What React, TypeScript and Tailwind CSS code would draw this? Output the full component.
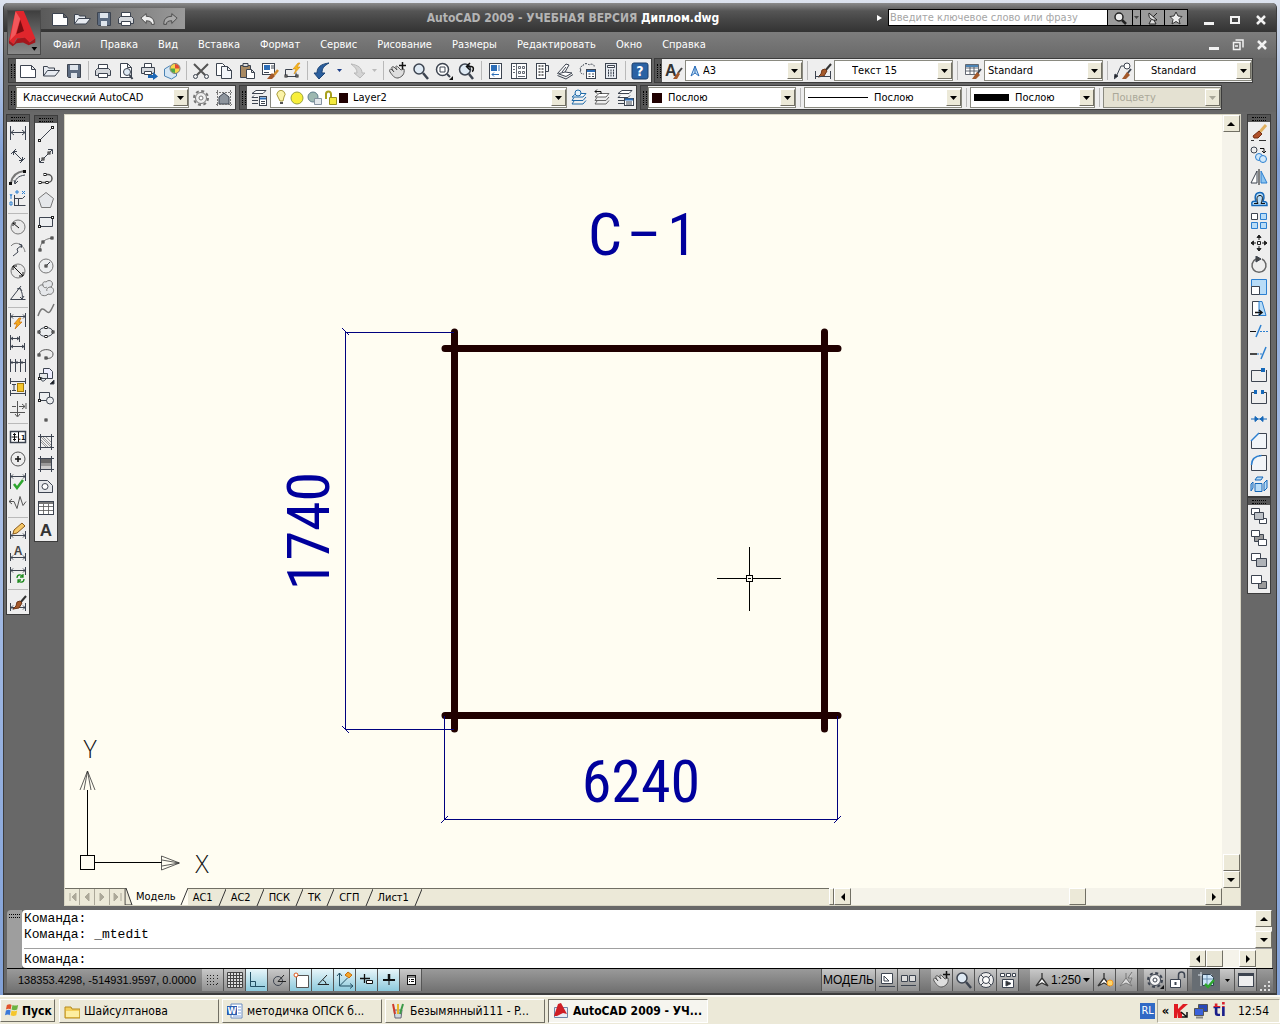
import type { ReactNode } from "react";
import clsx from "clsx";

type Item = string | null;

const sq = (x: number, y: number) => <rect x={x - 1} y={y - 1} width="2" height="2" fill="#fff" stroke="#222" strokeWidth="1" />;
const dimBase = <path d="M1.500 9v8M16.500 9v8M2 13.500h14M4 11.500l-2 2 2 2M14 11.500l2 2-2 2" />;
const dimTop = <path d="M1.500 1v16M16.500 1v8M2 4.500h14M4 2.500l-2 2 2 2M14 2.500l2 2-2 2" />;
const brush = <><path d="M17 2l-6 7" stroke="#333" strokeWidth="2" /><path d="M11 7l2 2-3 5-6 1 3-3 1-4z" fill="#a4592a" stroke="#6d3517" /></>;
const layers = (
  <><path d="M6 4.500h10l-3 3.500H2z" fill="#fff" /><path d="M4 8.500l-2 3h11l3-3.500M4 12l-2 3h11l3-3.500" /></>
);

// every toolbar glyph is drawn on an 18x18 grid
const glyphs: Record<string, ReactNode> = {
  "Новый": <path d="M1.500 3.500h11l4 4v8h-15zM12.500 3.500v4h4" fill="#fff" />,
  "Открыть": <path d="M1.500 14V4.500h4l1 1.500h6v2.500M1.500 14l4-5.500h12L13 14z" fill="#e8ecf2" />,
  "Сохранить": <><path d="M2.500 2.500h13v13h-12l-1-1z" fill="#5c6b80" /><path d="M5 3h8v5H5zM6 11h6v5H6z" fill="#dfe5ec" stroke="none" /></>,
  "Печать": <><path d="M4.500 6V2.500h9V6" fill="#fff" /><path d="M1.500 8.500l2-2h11l2 2v5h-15z" fill="#d5d8dc" /><path d="M4.500 11.500h9v4h-9z" fill="#fff" /></>,
  "Просмотр": <><path d="M3.500 1.500h7l4 4v10h-11zM10.500 1.500v4h4" fill="#fff" /><circle cx="10" cy="10" r="3.500" fill="#dfeaf4" /><path d="M12.500 13l3 4" strokeWidth="2" /></>,
  "Публикация": <><path d="M4.500 5V1.500h7V5" fill="#fff" /><path d="M1.500 5.500h13v6h-13z" fill="#d5d8dc" /><path d="M4.500 9.500h7v3h-7z" fill="#fff" /><path d="M8 13h5v-3l5 4.500-5 3.500v-2H8z" fill="#1b66b5" stroke="none" /></>,
  "3D DWF": <><path d="M1.500 7l5-3 7 2v8l-5 3-7-3z" fill="#d5e6f4" stroke="#4b83b4" /><circle cx="12" cy="6.500" r="5" fill="#f6d64a" stroke="#7a7a7a" /><path d="M12 6.500V2a5 5 0 0 1 4.500 4.500z" fill="#e24a36" stroke="none" /><path d="M12 6.500H7.500A5 5 0 0 0 12 11z" fill="#4ea84a" stroke="none" /></>,
  "Вырезать": <><path d="M2 2l11 11M16 2L5 13" strokeWidth="2" stroke="#555" /><circle cx="3.500" cy="14.500" r="2" /><circle cx="14.500" cy="14.500" r="2" /></>,
  "Копировать": <><path d="M1.500 1.500h6l3 3v9h-9z" fill="#fff" /><path d="M6.500 4.500h6l4 4v8h-10zM12.500 4.500v4h4" fill="#f3f6fa" /></>,
  "Вставить": <><path d="M2.500 3.500h10v12h-10z" fill="#a98a62" /><path d="M5 1.500h5v3H5z" fill="#ddd" /><path d="M8.500 7.500h5l3 3v6h-8zM13.500 7.500v3h3" fill="#fff" /></>,
  "Копирование свойств": <><rect x="1.500" y="1.500" width="12" height="11" fill="#fff" /><rect x="3" y="3" width="6" height="5" fill="#2b6db8" stroke="none" /><path d="M10 4h3M10 6h3M3 10.500h5" /><path d="M17 8l-4 5" stroke="#d08a2c" strokeWidth="2.500" /><path d="M11 11l3 3-3 3H6z" fill="#a4592a" stroke="none" /></>,
  "Редактор блоков": <><path d="M1.500 13V7.500h7M3 14.500h9v-4" /><path d="M14 1l-5 6h3l-2 5 6-7h-3l3-4z" fill="#f4b71e" stroke="#d98c0c" strokeWidth=".6" />{sq(2, 14)}{sq(13, 14)}</>,
  "Отменить": <path d="M6 17L1 11h3C4 5 8 2 16 1c-5 3-7 5-7 10h3z" fill="#2b5f9e" stroke="#1d4576" />,
  "Повторить": <path d="M12 16l5-5h-3c0-5-4-8-11-9 4 3 6 5 6 9H6z" fill="#d4d4d4" stroke="#b8b8b8" />,
  "Панорамирование": <><path d="M2 7l3 3C2 6 2 4 5 5l3 3C6 4 7 3 9 5l3 3 3-1c1 5-2 8-6 9-4 0-5-2-8-6-1-2 0-3 1-3z" fill="#dedede" stroke="#555" /><path d="M13.500 0v7M10 3.500h7" stroke="#111" strokeWidth="1.500" /></>,
  "Зумирование": <><circle cx="7" cy="7" r="5" fill="#dfeaf4" strokeWidth="1.500" /><path d="M11 11l5 6" strokeWidth="2.500" /></>,
  "Рамка": <><circle cx="7.500" cy="7.500" r="6" fill="#fff" strokeWidth="1.500" /><path d="M5 5h5v5H5z" /><path d="M12 12l3 3" strokeWidth="2" /><path d="M14 18h4v-4z" fill="#111" stroke="none" /></>,
  "Предыдущий": <><circle cx="7" cy="7.500" r="5.500" fill="#dfeaf4" strokeWidth="1.500" /><path d="M11 12l4 5" strokeWidth="2.500" /><path d="M9 4.500h4c3 0 3 4 1 5M12 1L8.500 4.500 12 8" stroke="#111" strokeWidth="1.500" /></>,
  "Свойства": <><rect x="2.500" y="1.500" width="12" height="15" fill="#fff" /><rect x="4" y="3" width="6" height="6" fill="#2b6db8" stroke="none" /><path d="M11 4h2M11 6h2M11 8h2M5 12.500h7M7 10.500l-2 2 2 2" stroke="#2b6db8" /></>,
  "Центр управления": <><rect x="1.500" y="1.500" width="15" height="15" fill="#fff" /><path d="M6.500 2v14M3 4.500h2M3 7.500h2M3 10.500h2M8.500 4.500h2v2h-2zM12.500 4.500h2v2h-2zM8.500 9.500h2v2h-2zM12.500 9.500h2v2h-2zM8 14.500h7" strokeWidth=".8" /></>,
  "Палитры": <><rect x="3.500" y="1.500" width="9" height="15" fill="#fff" /><path d="M5.500 4h5M5.500 7h5M5.500 10h5M5.500 13h5" strokeDasharray="2 1" strokeWidth="2" stroke="#777" /><path d="M12.500 3.500h3v6h-3" /></>,
  "Подшивки": <><path d="M1.500 11.500L10 2l3 1-4 7 7 1-6 3.500z" fill="#fff" /><path d="M9 10l-6 1.500M10 5l-4 5M1.500 13.500L10 17l7-4.500" /></>,
  "Пометки": <><path d="M2 8c-2-2 0-4 2-4 0-3 5-3 6-1 3-2 6 0 5 2M2 8c-2 2 0 4 3 4" strokeDasharray="2 1" /><rect x="7.500" y="7.500" width="9" height="9" fill="#fff" /><path d="M8 9h8" stroke="#2b6db8" strokeWidth="2" /><path d="M9.500 12h2M13 12h2M9.500 14.500h2M13 14.500h2" /></>,
  "Калькулятор": <><rect x="3.500" y="1.500" width="11" height="15" fill="#e8ecf2" /><path d="M5.500 3.500h7v2h-7z" fill="#fff" /><path d="M6 8.500h6M6 11h6M6 13.500h6" strokeDasharray="1 1.500" strokeWidth="2" /></>,
  "Справка AutoCAD": <><rect x="1" y="1" width="16" height="16" rx="2" fill="#2a62a4" stroke="#1b3f6d" /><text x="9" y="14" textAnchor="middle" fontSize="14" fontWeight="700" fill="#fff" stroke="none">?</text></>,
  "Стиль текста": <><text x="0" y="14" fontSize="16" fontWeight="700" fill="#333" stroke="none" className="font-['Liberation_Sans',sans-serif]">A</text><path d="M17 6l-4 5" stroke="#444" strokeWidth="2" /><path d="M13 10l2 2-3 5H8z" fill="#a4592a" stroke="none" /></>,
  "Размерный стиль": <>{brush}<path d="M1.500 9v8M16.500 9v8M2 14.500h14" /></>,
  "Стиль таблиц": <><path d="M1.500 2.500h13v10h-13zM2 6h12M2 9h12M6 3v9M10 3v9" fill="#fff" strokeWidth=".8" /><path d="M2 4h12" stroke="#4b83b4" strokeWidth="2" /><path d="M17 7l-4 5" strokeWidth="2" /><path d="M13 10l3 3-4 4H8z" fill="#a4592a" stroke="none" /></>,
  "Стиль мультивыносок": <><path d="M2 15L7 4h4" /><circle cx="13" cy="4" r="3" fill="#fff" /><path d="M0 17l1-5 3 2z" fill="#222" /><path d="M17 7l-4 5" strokeWidth="2" /><path d="M13 10l3 3-4 4H8z" fill="#a4592a" stroke="none" /></>,
  "Параметры рабочего пространства": <><circle cx="9" cy="9" r="7" strokeDasharray="3 2.500" strokeWidth="2" stroke="#777" /><circle cx="9" cy="9" r="5.500" fill="#eee" stroke="#777" /><circle cx="9" cy="9" r="2" fill="#fff" stroke="#777" /></>,
  "Мое пространство": <><path d="M4 15V8l5-4 5 4v7z" fill="#8e959d" /><path d="M1 3.500h16M1 15.500h16M2.500 1v16M15.500 1v16" strokeDasharray="2 1" stroke="#777" /></>,
  "Диспетчер слоев": <><path d="M6 1.500h10l-3 3H2zM4 6.500l-2 2h6M2 11.500h6M2 14.500h6" fill="#fff" /><rect x="9.500" y="7.500" width="7" height="9" fill="#fff" /><path d="M10 9.500h6" stroke="#2b6db8" strokeWidth="2" /><path d="M11 12.500h4M11 14.500h4" /></>,
  "Текущий слой": <g stroke="#1f6aa8">{layers}<circle cx="8" cy="4" r="3" fill="#e6f2fb" /></g>,
  "Предыдущий слой": <><g stroke="#666">{layers}</g><path d="M8 5V2.500H2m2-2L2 2.500l2 2" stroke="#111" /></>,
  "Состояния слоев": <><path d="M6 1.500h10l-3 3H2zM4 6.500l-2 2h10l2-2M2 11.500h6M2 14.500h6" fill="#fff" /><rect x="8.500" y="9.500" width="9" height="7" fill="#fff" /><path d="M9 10.500h8" stroke="#2b6db8" strokeWidth="2" /><path d="M10 13h6M10 15h6" /></>,
  // dimensions
  "Линейный": <path d="M1.500 2v14M16.500 2v14M2 8.500h14M5 6l-3 2.500L5 11M13 6l3 2.500-3 2.500" />,
  "Параллельный": <path d="M4.500 5.500l9 9M2 8l5-5M11 17l5-5M4.500 9V5.500H8M13.500 11v3.500H10" />,
  "Длина дуги": <><path d="M2 15C3 8 7 4 15 3" stroke="#777" strokeWidth="2" /><path d="M6 16c0-5 3-8 10-9M5 12l1 4 3-3" /><path d="M14 2h3v3h-3zM0 14h3v3H0z" fill="#111" stroke="none" /></>,
  "Ординатный": <><path d="M5.500 5v11M5.500 15.500h11M9.500 15V8.500h4L16 6M5.500 8.500h4" /><path d="M1 4l1 2v3M3 4L2 6M13 1l3 3M16 1l-3 3M1 12h2v3H1zM7 1h2v2H7z" stroke="#2b7fd0" /></>,
  "Радиус": <><circle cx="9" cy="9" r="7" fill="#e9e9e9" stroke="#777" /><path d="M10 10L4 5m0 3V5h3" stroke="#111" /></>,
  "С изломом": <><path d="M2 6c5-6 13-1 14 6" stroke="#777" /><path d="M4 16l5-4-1-3 5-4M10 4l3 1-1 3" /></>,
  "Диаметр": <><circle cx="9" cy="9" r="7" fill="#e9e9e9" stroke="#777" /><path d="M4 4l10 10M4 8V4h4M14 10v4h-4" stroke="#111" /></>,
  "Угловой": <path d="M12 2L1.500 15.500h15M10 4c3 3 4 7 3 11M8 5l3-1 2 3M11 13l2 2 2-3" />,
  "Быстрый": <><path d="M1.500 1v14M16.500 1v14M2 4.500h14M4 2.500l-2 2 2 2M14 2.500l2 2-2 2" /><path d="M10 6l-5 6h3l-2 5 7-7h-3l2-4z" fill="#f4a91e" stroke="#c96f08" strokeWidth=".7" /></>,
  "Базовый": <path d="M1.500 1v15M2 4.500h8M10.500 2v6M2 12.500h13M15.500 9v7M4 3L2 4.500 4 6M8 3l2 1.500L8 6M4 11l-2 1.500 2 1.500M13 11l2 1.500-2 1.500" />,
  "Продолжить": <path d="M1.500 3v13M6.500 3v13M11.500 3v13M16.500 3v13M2 6.500h15M3 5v3M8 5v3M13 5v3" />,
  "Расстояние": <><path d="M1.500 0v6M16.500 0v6M2 3.500h14M1.500 12v6M16.500 12v6M2 15.500h14M3 6.500h4M3 12.500h4M5 7v5" /><rect x="8.500" y="5.500" width="6" height="8" fill="#f6c62c" stroke="#a57c08" /></>,
  "Разрыв": <path d="M8.500 1v15M1 12.500h15M6 14l2.500 3 2.500-3M3 6.500h4M17 3v6M10 6.500h6M13 4l3 2.500L13 9" stroke="#555" />,
  "Допуск": <><rect x="1.500" y="3.500" width="15" height="11" fill="#fff" strokeWidth="1.500" /><path d="M9.500 4v10M5.500 5.500v7M2.500 9h6M4 7l1.500-1.500L7 7M4 11l1.500 1.500L7 11" stroke="#111" /><text x="13" y="12" textAnchor="middle" fontSize="7" fontWeight="700" fill="#111" stroke="none">.1</text></>,
  "Маркер центра": <><circle cx="9" cy="9" r="7" fill="#eee" stroke="#555" /><path d="M9 6v6M6 9h6" stroke="#111" strokeWidth="1.500" /></>,
  "Контроль": <>{dimTop}<path d="M5 12l3 4 6-8" stroke="#2da52d" strokeWidth="2.500" /></>,
  "С изломом линейный": <path d="M0 7.500h5l3 7 3-12 3 9 3-4M3 5L0 7.500 3 10" stroke="#555" />,
  "Редактировать размер": <>{dimBase}<path d="M13 1l3 3-8 7-4 1 1-4z" fill="#f5c768" stroke="#8a5a1a" /></>,
  "Редактировать текст": <>{dimBase}<text x="9" y="11" textAnchor="middle" fontSize="12" fontWeight="700" fill="#444" stroke="none" className="font-['Liberation_Sans',sans-serif]">A</text></>,
  "Обновить размер": <>{dimTop}<path d="M8 12c0-4 5-4 6-1M14 8v3h-3M15 13c0 4-5 4-6 1M9 17v-3h3" stroke="#1f8a1f" strokeWidth="1.300" /></>,
  "Размерные стили": <>{dimBase}{brush}</>,
  // draw
  "Отрезок": <><path d="M3 15L15 3" />{sq(2.5, 15.5)}{sq(15.5, 2.5)}</>,
  "Прямая": <><path d="M3 15L15 3M11 2.500h4.500V7M7 15.500H2.500V11" />{sq(6, 12)}{sq(12, 6)}</>,
  "Полилиния": <><path d="M3 13.500h8a4 4 0 0 0 0-8H8" strokeWidth="1.500" stroke="#555" />{sq(3, 13.5)}{sq(10, 13.5)}{sq(8, 5.5)}</>,
  "Многоугольник": <path d="M9 1.500l7.500 6-3 9h-9l-3-9z" fill="#e5e7ea" stroke="#777" />,
  "Прямоугольник": <><path d="M2.500 4.500h13v9h-13z" fill="#eceef0" />{sq(2.5, 13.5)}{sq(15.5, 4.5)}</>,
  "Дуга": <><path d="M3 15C3 8 7 4 15 3" stroke="#777" />{sq(3, 15)}{sq(6, 7)}{sq(15, 3)}</>,
  "Круг": <><circle cx="9" cy="9" r="7" fill="#eceef0" stroke="#777" /><path d="M9 9l4-4" />{sq(9, 9)}</>,
  "Облако": <path d="M9 3c4-4 9 1 5 5 5 2 2 9-3 7-2 3-9 2-8-3-4-3 0-7 3-6-1-2 1-4 3-3zM6 6c0 3 3 3 4 2M14 8c-3 0-5 2-4 4" fill="#e5e7ea" stroke="#777" />,
  "Сплайн": <path d="M1 15c3-9 5-8 8-5s4 2 8-7" stroke="#777" strokeWidth="1.500" />,
  "Эллипс": <><ellipse cx="9" cy="9" rx="7" ry="4.500" fill="#eceef0" />{sq(2, 9)}{sq(16, 9)}{sq(9, 4.5)}{sq(9, 13.5)}</>,
  "Эллиптическая дуга": <><path d="M2 10c0-7 14-7 14-1 0 4-4 5-7 4" stroke="#555" />{sq(2, 10)}{sq(9, 13)}</>,
  "Вставить блок": <><path d="M6.500 1.500h6l3 3v7h-9z" fill="#eef" /><path d="M2.500 6.500h8v5h-8zM9 12c-4 5-6 0-4-2" fill="#e5e7ea" /><path d="M13 17h4v-4z" fill="#111" />{sq(2.5, 11.5)}</>,
  "Создать блок": <><path d="M2.500 3.500h10v8h-10z" fill="#eceef0" /><circle cx="13" cy="11.500" r="3.500" fill="#eceef0" />{sq(2.5, 11.5)}</>,
  "Точка": sq(9, 9),
  "Штриховка": <><path d="M1 3.500h16M1 14.500h16M3.500 1v16M14.500 1v16" /><path d="M4 9l5 5M4 4l10 10M9 4l5 5M6 4l8 8M4 7l7 7" stroke="#777" strokeWidth=".7" /></>,
  "Градиент": <><rect x="4" y="4" width="10" height="4" fill="#666" stroke="none" /><rect x="4" y="8" width="10" height="3" fill="#999" stroke="none" /><rect x="4" y="11" width="10" height="3" fill="#ccc" stroke="none" /><path d="M1 3.500h16M1 14.500h16M3.500 1v16M14.500 1v16" /></>,
  "Область": <><path d="M1.500 3.500h9l5 5v7h-14z" fill="#e5e7ea" /><circle cx="8" cy="9.500" r="3" fill="#fff" /></>,
  "Таблица": <><rect x="1.500" y="2.500" width="15" height="13" fill="#fff" /><path d="M2 4h14" stroke="#777" strokeWidth="2" /><path d="M2 7.500h14M2 11.500h14M6.500 5v10M11.500 5v10" stroke="#555" strokeWidth=".8" /></>,
  "Многострочный текст": <text x="9" y="15" textAnchor="middle" fontSize="17" fontWeight="700" fill="#333" stroke="none" className="font-['Liberation_Sans',sans-serif]">A</text>,
  // modify
  "Стереть": <><path d="M16 1L9 9" stroke="#e0b060" strokeWidth="3" /><path d="M9 7l3 3-4 4H4l-1-2z" fill="#b0502a" stroke="#702c10" /><path d="M1 16.500h3M9 16.500h7" stroke="#333" /></>,
  "Копировать объект": <><circle cx="4" cy="4" r="3" /><path d="M10 2.500h4v4M12 5l2 2 2-2" stroke="#111" /><g fill="#cfe7fa" stroke="#2b7fd0"><circle cx="9" cy="11" r="3.500" /><circle cx="13" cy="13" r="3.500" /></g></>,
  "Зеркало": <><path d="M7 3v12H1z" fill="#fff" /><path d="M9 1v16" stroke="#111" /><path d="M11 3v12h6z" fill="#8cc4f0" stroke="#2b7fd0" /></>,
  "Подобие": <><path d="M2 15.500c-1-4 1-5 4-4-2-6 0-9 4-9s5 4 3 9c4 0 4 1 4 4z" fill="#b8dcf7" stroke="#1467b8" strokeWidth="1.500" /><path d="M4 13.500h4c-2-5-1-8 2-8s3 3 1 8h4" stroke="#111" /></>,
  "Массив": <><path d="M1.500 1.500h6v6h-6z" fill="#fff" /><path d="M10.500 1.500h6v6h-6zM1.500 10.500h6v6h-6zM10.500 10.500h6v6h-6z" fill="#b8dcf7" stroke="#2b7fd0" /></>,
  "Перенести": <><path d="M9 1v5M9 12v5M1 9h5M12 9h5M7 3.500L9 1l2 2.500zM7 14.500L9 17l2-2.500zM3.500 7L1 9l2.500 2zM14.500 7L17 9l-2.500 2z" stroke="#222" fill="#222" /><path d="M7.500 7.500h3v3h-3z" stroke="#222" /></>,
  "Повернуть": <><path d="M6 3a7 7 0 1 0 6 0" stroke="#666" strokeWidth="1.500" /><path d="M6 0l5 3-5 3z" fill="#444" /></>,
  "Масштаб": <><path d="M1.500 1.500h15v15h-7v-8h-8z" fill="#b8dcf7" stroke="#2b7fd0" /><path d="M1.500 8.500h8v8h-8z" fill="#fff" /></>,
  "Растянуть": <><path d="M2.500 1.500h7v14h-7z" fill="#fff" /><path d="M9 1.500h3l4 14H9z" fill="#b8dcf7" stroke="#2b7fd0" /><path d="M5 12.500h6M9 10l3 2.500L9 15" stroke="#111" strokeWidth="1.500" /></>,
  "Обрезать": <><path d="M0 9.500h6" stroke="#111" /><path d="M10 9.500h8" strokeDasharray="2 1" stroke="#2b7fd0" /><path d="M6 15l5-12" stroke="#2b7fd0" strokeWidth="1.500" /></>,
  "Удлинить": <><path d="M0 10h7" stroke="#111" strokeWidth="1.500" /><path d="M7 10h5" strokeDasharray="2 1" stroke="#2b7fd0" /><path d="M11 15l5-12" stroke="#2b7fd0" strokeWidth="1.500" /></>,
  "Разорвать в точке": <><path d="M1.500 15.500V4.500h11M16.500 4v11.500h-15" /><rect x="11" y="2" width="4" height="4" fill="#1467b8" stroke="none" /></>,
  "Разорвать": <><path d="M4 4.500H1.500v11h15v-11H14" /><path d="M4 2h3v4H4zM11 2h3v4h-3z" fill="#1467b8" stroke="none" /></>,
  "Соединить": <path d="M1 9h16M5 6.500L8 9l-3 2.500zM13 6.500L10 9l3 2.500z" fill="#1467b8" stroke="#1467b8" />,
  "Фаска": <><path d="M8 1.500h8.500v15h-15V8" fill="#f2f5f8" /><path d="M1 9l8-8" stroke="#2b7fd0" strokeWidth="1.500" /></>,
  "Сопряжение": <><path d="M9 1.500h7.500v15h-15V10" fill="#f2f5f8" /><path d="M1.500 11c0-6 4-9 10-9.500" stroke="#2b7fd0" strokeWidth="1.500" /></>,
  "Расчленить": <g fill="#b8dcf7" stroke="#1467b8"><path d="M5 7.500h7v8H5zM5 4l2-3h6l-2 3zM14 7l3-3v8l-3 3zM1 8l2-2v6l-2 3z" /></g>,
  // draw order
  "На передний план": <><path d="M1.500 1.500h8v6h-8zM9.500 11.500h7v5h-7z" fill="#fff" /><path d="M4.500 5.500h9v7h-9z" fill="#bcc0c5" /></>,
  "На задний план": <><path d="M4.500 5.500h9v7h-9z" fill="#999" /><path d="M1.500 1.500h8v6h-8zM8.500 10.500h8v6h-8z" fill="#fff" /></>,
  "Над объектами": <><path d="M1.500 2.500h9v7h-9z" fill="#fff" /><path d="M6.500 7.500h10v8h-10z" fill="#aeb2b7" /></>,
  "Под объектами": <><path d="M8.500 8.500h8v7h-8z" fill="#999" /><path d="M1.500 2.500h10v8h-10z" fill="#fff" /></>,
  // status bar
  "Шаг": <path d="M3 4.500h8M3 7.500h8M3 10.500h8M3 13.500h10M13.500 4v6M13.500 12v2" strokeDasharray="1 2" stroke="#222" />,
  "Сетка": <path d="M1.500 1.500h15v15h-15zM4.500 2v14M7.500 2v14M10.500 2v14M13.500 2v14M2 4.500h14M2 7.500h14M2 10.500h14M2 13.500h14" stroke="#444" fill="#ddd" />,
  "Орто": <path d="M2.500 1v14.500H17M2.500 10.500h5v5" stroke="#234f63" />,
  "Полярное": <><circle cx="8" cy="10" r="4.500" /><path d="M14 4L8 10.500h8" stroke="#222" /></>,
  "Привязка": <><path d="M4.500 4.500h12v12h-12z" fill="#fff" stroke="#555" /><circle cx="4" cy="4" r="2" fill="#fff" stroke="#e05a1c" /></>,
  "Отслеживание": <path d="M13 4L4 13.500h11M9 9c2 1 3 3 3 4" stroke="#222" />,
  "ДПСК": <><path d="M3.500 2v13h13M3.500 15l8-8M1 5l2.500-3L6 5M14 12.500l3 2.500-3 2.500" stroke="#234f63" /><path d="M12 1l4 3-3 3-4-3z" fill="#f5a62a" stroke="#c76c0a" /></>,
  "Дин. ввод": <><path d="M6.500 3v9M2 7.500h10" stroke="#111" strokeWidth="1.300" /><path d="M8.500 9.500h6v3h-6z" fill="#fff" stroke="#111" /></>,
  "Вес линий": <><path d="M9 3v11" stroke="#111" strokeWidth="1" /><path d="M3 9h12" stroke="#111" strokeWidth="2" /><path d="M9 3v6" stroke="#111" strokeWidth="2.500" /></>,
  "Быстрые свойства": <><rect x="5.500" y="4.500" width="8" height="9" fill="#fff" stroke="#111" /><path d="M6 6h7M7 8.500h1M9 8.500h3M7 10.500h1M9 10.500h3" stroke="#111" /></>,
  "Лист": <><path d="M3.500 2.500h11v10h-11z" fill="#fff" /><path d="M6 5v5h5zM1 15.500h16" /></>,
  "Быстрый просмотр": <path d="M1.500 4.500h6v6h-6zM9.500 4.500h6v6h-6zM1 14.500h15" fill="#ddd" />,
  "Штурвал": <><circle cx="9" cy="9" r="7.500" fill="#eee" /><circle cx="9" cy="9" r="3.500" fill="#fff" /><path d="M4 4l3 3M14 4l-3 3M4 14l3-3M14 14l-3-3" /></>,
  "Аниматор": <><path d="M1.500 2.500h4v3h-4zM7.500 2.500h4v3h-4zM13.500 2.500h3v3h-3z" fill="#fff" /><path d="M3.500 8.500h11v8h-11z" fill="#fff" /><path d="M7 10l5 2.500L7 15z" fill="#333" /></>,
  "Аннотации": <path d="M9 2v5L3 15l6-3 6 3-6-8" fill="#fff" stroke="#333" strokeWidth="1.300" />,
  "Видимость аннотаций": <><path d="M8 2v5L2 15l6-3 6 3-6-8" fill="#fff" stroke="#333" strokeWidth="1.300" /><circle cx="14" cy="12" r="3" fill="#ffd56a" stroke="#f59b22" /></>,
  "Автоаннотации": <g stroke="#777"><path d="M8 2v5L2 15l6-3 6 3-6-8" fill="#ddd" /><path d="M14 1l-4 6h4l-2 5" fill="#ccc" /></g>,
  "Настройка": <><circle cx="9" cy="9" r="7" strokeDasharray="3 2.500" strokeWidth="2" /><circle cx="9" cy="9" r="5.500" fill="#f5f5f5" /><circle cx="9" cy="9" r="2" fill="#fff" /><path d="M14 18h4v-4z" fill="#111" stroke="none" /></>,
  "Блокировка": <><path d="M10.500 8V4a3 3 0 0 1 6 0v3" strokeWidth="1.500" /><path d="M2.500 8.500h10v8h-10z" fill="#fff" /><path d="M7.500 11v3" strokeWidth="2" /></>,
  "Доверенные": <><path d="M4 1v14M1 4h14" stroke="#dfe8f0" /><path d="M5.500 3.500h8l3 3v8h-11z" fill="#cfe7fa" stroke="#345" /><path d="M6 8h10M10 4v10" stroke="#6b8fb0" /><path d="M8 13l3 3 6-7" stroke="#2da52d" strokeWidth="2.500" /></>,
  "Очистить экран": <><rect x="1.500" y="2.500" width="15" height="13" fill="#eee" /><path d="M2 4h14" strokeWidth="2" /></>,
};

function Icon({ name }: { name: string }) {
  return (
    <svg viewBox="0 0 18 18" className="size-[18px] shrink-0" fill="none" stroke="#3d4450" aria-hidden="true">
      {glyphs[name]}
    </svg>
  );
}

const mainTools: Item[] = ["Новый", "Открыть", "Сохранить", null, "Печать", "Просмотр", "Публикация", "3D DWF", null, "Вырезать", "Копировать", "Вставить", "Копирование свойств", "Редактор блоков", null, "Отменить", ">", "Повторить", ">>", null, "Панорамирование", "Зумирование", "Рамка", "Предыдущий", null, "Свойства", "Центр управления", "Палитры", "Подшивки", "Пометки", "Калькулятор", null, "Справка AutoCAD"];
const dimTools: Item[] = ["Линейный", "Параллельный", "Длина дуги", "Ординатный", null, "Радиус", "С изломом", "Диаметр", "Угловой", null, "Быстрый", "Базовый", "Продолжить", "Расстояние", "Разрыв", null, "Допуск", "Маркер центра", "Контроль", "С изломом линейный", null, "Редактировать размер", "Редактировать текст", "Обновить размер", null, "Размерные стили"];
const drawTools: Item[] = ["Отрезок", "Прямая", "Полилиния", "Многоугольник", "Прямоугольник", "Дуга", "Круг", "Облако", "Сплайн", "Эллипс", "Эллиптическая дуга", "Вставить блок", "Создать блок", "Точка", "Штриховка", "Градиент", "Область", "Таблица", "Многострочный текст"];
const modifyTools: Item[] = ["Стереть", "Копировать объект", "Зеркало", "Подобие", "Массив", "Перенести", "Повернуть", "Масштаб", "Растянуть", "Обрезать", "Удлинить", "Разорвать в точке", "Разорвать", "Соединить", "Фаска", "Сопряжение", "Расчленить"];
const orderTools: Item[] = ["На передний план", "На задний план", "Над объектами", "Под объектами"];
const menus = ["Файл", "Правка", "Вид", "Вставка", "Формат", "Сервис", "Рисование", "Размеры", "Редактировать", "Окно", "Справка"];
const layouts = ["Модель", "АС1", "АС2", "ПСК", "ТК", "СГП", "Лист1"];

const bevel = "border border-t-white border-l-white border-r-[#716f64] border-b-[#716f64] bg-[#ece9d8]";

function Grip({ vertical }: { vertical?: boolean }) {
  return vertical ? (
    <div className="h-[7px] shrink-0 bg-[#555] flex items-center justify-center">
      <div className="w-[14px] h-1 border-y border-dotted border-black" />
    </div>
  ) : (
    <div className="w-[7px] shrink-0 bg-[#555] flex items-center justify-center">
      <div className="h-[14px] w-1 border-x border-dotted border-black" />
    </div>
  );
}

function Bar({ children }: { children: ReactNode }) {
  return (
    <div className="flex h-[25px] border border-[#3c3c3c] bg-[#eeeeee]">
      <Grip />
      <div className="flex items-center">{children}</div>
    </div>
  );
}

function Sep({ wide }: { wide?: boolean }) {
  return <div className={clsx("h-[19px] shrink-0 flex justify-center", wide ? "w-2" : "w-[6px]")}><div className="w-px bg-[#b9b9b9]" /></div>;
}

function Tool({ name }: { name: Item }) {
  if (!name) return <Sep />;
  if (name[0] === ">") {
    return (
      <button aria-label={name === ">" ? "Список отмены" : "Список повтора"} className="w-3 h-[22px] flex items-center justify-center">
        <svg viewBox="0 0 5 3" className="w-[5px] h-[3px]"><path d="M0 0h5L2.500 3z" fill={name === ">" ? "#1d3f8a" : "#bbb"} /></svg>
      </button>
    );
  }
  return (
    <button aria-label={name} className="w-[23px] h-[22px] flex items-center justify-center">
      <Icon name={name} />
    </button>
  );
}

function Column({ items }: { items: Item[] }) {
  return (
    <div className="w-6 border border-[#3c3c3c] bg-[#eeeeee]">
      <Grip vertical />
      {items.map((n, i) =>
        n ? (
          <button key={i} aria-label={n} className="flex h-[22px] w-full items-center justify-center">
            <Icon name={n} />
          </button>
        ) : (
          <div key={i} className="h-[6px] flex items-center px-px"><div className="h-px w-full bg-[#b9b9b9]" /></div>
        ),
      )}
    </div>
  );
}

function Combo({ label, value, width, pad = "pl-[5px]", disabled, children }: { label: string; value: string; width: string; pad?: string; disabled?: boolean; children?: ReactNode }) {
  return (
    <div className={clsx("relative h-[21px] shrink-0", width)}>
      <select
        aria-label={label}
        disabled={disabled}
        className={clsx("block h-full w-full appearance-none border border-[#8a8a80] text-[11px] leading-none outline-none", pad, disabled ? "bg-[#e4e1d2] text-[#aaa899] opacity-100" : "bg-white text-black")}
      >
        <option>{value}</option>
      </select>
      <span className="pointer-events-none absolute inset-y-0 left-1 flex items-center gap-px">{children}</span>
      <span className={clsx("pointer-events-none absolute right-px top-[2px] flex h-[17px] w-[15px] items-center justify-center", bevel)}>
        <svg viewBox="0 0 7 4" className="h-1 w-[7px]"><path d="M0 0h7L3.500 4z" fill={disabled ? "#aaa899" : "#000"} /></svg>
      </span>
    </div>
  );
}

const arrows = { up: "M0 6h8L4 2z", down: "M0 2h8L4 6z", left: "M6 0v8L2 4z", right: "M2 0v8l4-4z" };

function ScrollButton({ dir }: { dir: keyof typeof arrows }) {
  return (
    <button aria-label={dir} className={clsx("flex size-[17px] shrink-0 items-center justify-center", bevel)}>
      <svg viewBox="0 0 8 8" className="size-2"><path d={arrows[dir]} /></svg>
    </button>
  );
}

function Thumb() {
  return <div className={clsx("size-[17px] shrink-0", bevel)} />;
}

function WindowButtons({ child }: { child?: boolean }) {
  return (
    <div className="flex shrink-0 items-center">
      {["Свернуть", "Развернуть", "Закрыть"].map((n, i) => (
        <button key={n} aria-label={n} className={clsx("flex h-5 items-center justify-center", child ? "w-6" : "w-[26px]")}>
          <svg viewBox="0 0 12 12" className="size-3" fill="none" stroke="#f2f2f2" strokeWidth="2">
            {i === 0 && <path d="M1 9.500h10" strokeWidth="3" />}
            {i === 1 && (child ? <path d="M3.500 1h7.500v7.500M1.500 3.500h6.500v7H1.500zM3 7h3" strokeWidth="1.500" /> : <path d="M2 3h8v6H2z" />)}
            {i === 2 && <path d="M2 2l8 8M10 2l-8 8" strokeWidth="2.500" />}
          </svg>
        </button>
      ))}
    </div>
  );
}

function Header() {
  return (
    <header className="flex h-[55px] shrink-0 bg-[linear-gradient(#8b8b8b_0px,#555_8px,#474747_16px,#333_29px,#7d7d7d_29px,#696969_55px)] pl-[3px]">
      <button aria-label="AutoCAD" className="mt-[7px] h-[45px] w-[34px] shrink-0 border border-[#4a4a4a] bg-[linear-gradient(#3f3f3f,#8a8a8a)]">
        <svg viewBox="0 0 34 45" className="h-full w-full">
          <path d="M8 0l8-2 13 31-7 4-5-5-8 1-3 6-5-4z" fill="#e0262c" />
          <path d="M13 9l4 12-8 3z" fill="#7c0d12" />
          <path d="M1 31l5 4 4-6 8-1 5 5 6-4v4l-7 3-6-3-7 1-4 3-4-3z" fill="#a3161c" />
          <path d="M8 0l5 8-5 17-6 6z" fill="#f2575b" />
          <path d="M25 38h6l-3 4z" fill="#000" />
        </svg>
      </button>
      <div className="flex min-w-0 flex-1 flex-col">
        <div className="flex h-[29px] items-center">
          <div className="mt-[5px] flex h-[21px] shrink-0 items-center self-start bg-[linear-gradient(90deg,#5a5a5a,#9a9a9a)] pl-2 pr-1">
            {["Новый", "Открыть", "Сохранить", "Печать"].map((n) => (
              <button key={n} aria-label={n} className="flex w-[22px] justify-center"><Icon name={n} /></button>
            ))}
            {[false, true].map((redo) => (
              <button key={String(redo)} aria-label={redo ? "Повторить" : "Отменить"} className="flex w-[22px] justify-center">
                <svg viewBox="0 0 18 18" className={clsx("size-4", redo && "-scale-x-100")}>
                  <path d="M1 8l6-5v3c6 0 9 3 9 9h-3c0-3-2-4-6-4v3z" fill={redo ? "#aaa" : "#eee"} stroke="#444" />
                </svg>
              </button>
            ))}
          </div>
          <h1 className="min-w-0 flex-1 truncate pl-[84px] text-center text-[12px] font-bold text-[#b4b4b4]">
            AutoCAD 2009 - УЧЕБНАЯ ВЕРСИЯ <span className="text-white">Диплом.dwg</span>
          </h1>
          <svg viewBox="0 0 5 6" className="mr-[6px] h-[6px] w-[5px] shrink-0"><path d="M0 0v6l5-3z" fill="#fff" /></svg>
          <div className="flex h-[17px] shrink-0 border border-black bg-[#9b9b9b]">
            <input aria-label="Поиск" placeholder="Введите ключевое слово или фразу" className="h-full w-[218px] bg-white pl-px text-[11px] outline-none placeholder:text-[#a5a5a5]" />
            <button aria-label="Найти" className="flex w-[25px] items-center justify-center border-l border-black"><svg viewBox="0 0 14 14" className="size-[14px]" fill="#eee" stroke="#222" strokeWidth="1.500"><circle cx="6" cy="6" r="4" /><path d="M9 9l4 4" strokeWidth="2.500" /></svg></button>
            <button aria-label="Место поиска" className="flex w-2 items-center justify-center border-l border-black"><svg viewBox="0 0 5 3" className="w-[5px] h-[3px]"><path d="M0 0h5L2.500 3z" fill="#444" /></svg></button>
            <button aria-label="Центр связи" className="flex w-6 items-center justify-center border-l border-black"><svg viewBox="0 0 14 14" className="size-[14px]" fill="none" stroke="#222"><path d="M3 2c-1 5 3 8 8 7zM7 6l4-4M5 9l-2 4h7l-2-4" fill="#ddd" /></svg></button>
            <button aria-label="Избранное" className="flex w-[23px] items-center justify-center border-l border-black"><svg viewBox="0 0 14 14" className="size-[14px]" fill="#eee" stroke="#333"><path d="M7 1l2 4 4 .5-3 3 1 4.500-4-2.500L3 13l1-4.500-3-3L5 5z" /></svg></button>
          </div>
          <div className="ml-2 mr-[2px] mt-1"><WindowButtons /></div>
        </div>
        <div className="flex h-[26px] items-center">
          <nav className="flex flex-1 pl-[2px]">
            {menus.map((m) => (
              <button key={m} className="px-[10px] text-[11px] text-white">{m}</button>
            ))}
          </nav>
          <div className="mr-[2px]"><WindowButtons child /></div>
        </div>
      </div>
    </header>
  );
}

function Toolbars() {
  return (
    <div className="flex shrink-0 flex-col gap-[2px] bg-[#666] pb-[2px] pl-1">
      <div className="flex gap-[2px]">
        <Bar>{mainTools.map((t, i) => <Tool key={i} name={t} />)}</Bar>
        <Bar>
          <Tool name="Стиль текста" />
          <Combo label="Текстовый стиль" value="А3" width="w-[118px]" pad="pl-[17px]">
            <svg viewBox="0 0 12 12" className="size-3" fill="#cfe7fa" stroke="#2b6db8"><path d="M6 1L2 11l4-3 4 3zM6 1v7" /></svg>
          </Combo>
          <Sep wide />
          <Tool name="Размерный стиль" />
          <Combo label="Размерный стиль" value="Текст 15" width="w-[119px]" pad="pl-[17px]" />
          <Sep wide />
          <Tool name="Стиль таблиц" />
          <Combo label="Стиль таблиц" value="Standard" width="w-[119px]" pad="pl-[3px]" />
          <Sep wide />
          <Tool name="Стиль мультивыносок" />
          <Combo label="Стиль мультивыносок" value="Standard" width="w-[118px]" pad="pl-[16px]" />
        </Bar>
      </div>
      <div className="flex gap-[3px]">
        <Bar>
          <Combo label="Рабочее пространство" value="Классический AutoCAD" width="w-[173px]" pad="pl-[6px]" />
          <Tool name="Параметры рабочего пространства" />
          <Tool name="Мое пространство" />
        </Bar>
        <Bar>
          <Tool name="Диспетчер слоев" />
          <Combo label="Слой" value="Layer2" width="w-[297px]" pad="pl-[82px]">
            <svg viewBox="0 0 74 16" className="h-4 w-[74px]" fill="none">
              <path d="M4 7a4 4 0 1 1 6 0l-1 4H6z" fill="#fbf3a8" stroke="#a89b3a" /><path d="M6 13h3" stroke="#555" strokeWidth="2" />
              <circle cx="23" cy="8" r="6" fill="#f8ef3a" stroke="#98a23c" />
              <circle cx="39" cy="7" r="5" fill="#9db8b0" stroke="#5f7f8c" /><path d="M40.500 8.500h7v6h-7z" fill="#e4e9ec" stroke="#8593a0" />
              <path d="M52 9V4a2 2 0 0 1 5 0v4" stroke="#a8a11e" strokeWidth="2" /><path d="M55.500 7.500h7v7h-7z" fill="#f4ea3c" stroke="#98921c" />
              <path d="M65 3h9v10h-9z" fill="#200000" />
            </svg>
          </Combo>
          <Tool name="Текущий слой" />
          <Tool name="Предыдущий слой" />
          <Tool name="Состояния слоев" />
        </Bar>
        <Bar>
          <Combo label="Цвет" value="Послою" width="w-[148px]" pad="pl-[19px]"><span className="size-[10px] bg-[#200000]" /></Combo>
          <Sep wide />
          <Combo label="Тип линий" value="Послою" width="w-[158px]" pad="pl-[69px]"><span className="h-px w-[60px] bg-black" /></Combo>
          <Sep wide />
          <Combo label="Вес линий" value="Послою" width="w-[125px]" pad="pl-[44px]"><span className="h-[7px] w-[35px] bg-black" /></Combo>
          <Sep wide />
          <Combo label="Стиль печати" value="Поцвету" width="w-[118px]" pad="pl-[8px]" disabled />
        </Bar>
      </div>
    </div>
  );
}

function Drawing() {
  return (
    <svg viewBox="65 115 1157 773" className="block min-h-0 w-full flex-1" fill="none" role="img" aria-label="С-1">
      <g stroke="#200000" strokeWidth="7" strokeLinecap="round">
        <path d="M445 348.500H838M445 715.500H838M454.500 332V729M824.500 332V729" />
      </g>
      <g stroke="#00007f">
        <path d="M345.500 332V730M345 332.500H454M345 729.500H454M444.500 716V820M837.500 716V820M444 819.500H838" />
        <path d="M342 328l7 7M342 726l7 7M441 823l7-7M834 823l7-7" />
      </g>
      <g fill="#00009c" className="font-['Roboto_Condensed','Roboto',sans-serif]" fontSize="60" textAnchor="middle">
        <text x="605" y="255">С</text>
        <text x="644" y="255">–</text>
        <text x="682" y="255">1</text>
        <text x="641" y="802">6240</text>
        <text transform="translate(329 531) rotate(-90)">1740</text>
      </g>
      <g stroke="#000" shapeRendering="crispEdges">
        <path d="M749.500 547v28M749.500 582v29M717 578.500h29M753 578.500h28M746.500 575.500h6v6h-6zM748 578.500h3" />
        <path d="M80.500 855.500h14v14h-14zM87.500 855V790M95 862.500h67" />
      </g>
      <path d="M80 790l7.500-19 7.500 19M84 790l3.500-19 3.500 19M161.500 856v14l18-7zM162 860l17 3-17 3" stroke="#333" strokeWidth=".8" />
      <g fill="#111" className="font-['Open_Sans',sans-serif]" fontSize="25" fontWeight="300" textAnchor="middle">
        <text x="90" y="758">Y</text>
        <text x="202" y="873">X</text>
      </g>
    </svg>
  );
}

function LayoutTabs() {
  return (
    <div className="flex h-[17px] shrink-0 bg-[#ece9d8]">
      <div className="flex flex-1 border-t border-[#716f64]">
        {["M4 1v8M10 1v8L6 5z", "M8 1v8L4 5z", "M4 1v8l4-4z", "M3 1v8l4-4zM10 1v8"].map((d) => (
          <button key={d} aria-label="Листы" className="flex w-[15px] items-center justify-center border-r border-[#aca899]">
            <svg viewBox="0 0 12 10" className="h-[10px] w-3" fill="#aca899" stroke="#aca899"><path d={d} /></svg>
          </button>
        ))}
        {layouts.map((t, i) => (
          <button key={t} className={clsx("flex items-center text-[11px] leading-none text-black", i === 0 ? "-mt-px bg-[#fffdf2]" : "")}>
            {i === 0 && <svg viewBox="0 0 8 17" className="h-[17px] w-2" stroke="#333" fill="#ece9d8"><path d="M0 0v17h7L1 0z" /></svg>}
            <span className={i === 0 ? "pl-[3px] pr-1" : "px-[5px]"}>{t}</span>
            <svg viewBox="0 0 8 17" className="h-[17px] w-2" stroke="#333" fill={i === 0 ? "#ece9d8" : "none"}><path d="M8 0L1 17" /></svg>
          </button>
        ))}
      </div>
      <div className={clsx("w-[5px]", bevel)} />
      <div className="flex w-[388px] bg-[#f5f3ea]">
        <ScrollButton dir="left" />
        <div className="flex-1" />
        <Thumb />
        <div className="w-[119px]" />
        <ScrollButton dir="right" />
      </div>
      <div className="w-[18px]" />
    </div>
  );
}

function CommandLine() {
  return (
    <div className="mt-1 flex h-[58px] shrink-0 pl-[3px] pr-1">
      <div className="w-[15px] rounded-tl bg-[#9e9e9e] pl-[2px] pt-1"><div className="h-1 w-[11px] border-y border-dotted border-black" /></div>
      <div className="flex flex-1 flex-col rounded-l bg-white pl-[2px] font-['Liberation_Mono',monospace] text-[13px] leading-4 text-black">
        <div className="flex h-10 border-b border-[#a0a0a0]">
          <div className="flex-1 pt-px">
            <p>Команда:</p>
            <p>Команда: _mtedit</p>
          </div>
          <div className="flex flex-col justify-between bg-[#f5f3ea]"><ScrollButton dir="up" /><ScrollButton dir="down" /></div>
        </div>
        <div className="flex flex-1 items-center">
          <label htmlFor="cmd" className="pt-[3px]">Команда:</label>
          <input id="cmd" className="min-w-0 flex-1 outline-none" />
          <div className="flex w-[67px] bg-[#f5f3ea]"><ScrollButton dir="left" /><Thumb /><div className="flex-1" /><ScrollButton dir="right" /></div>
          <div className="h-full w-4 bg-[#ece9d8]" />
        </div>
      </div>
    </div>
  );
}

const modes: [string, boolean][] = [["Шаг", false], ["Сетка", false], ["Орто", true], ["Полярное", false], ["Привязка", true], ["Отслеживание", true], ["ДПСК", true], ["Дин. ввод", true], ["Вес линий", true], ["Быстрые свойства", false]];

function StatusButton({ name, on, text }: { name: string; on?: boolean; text?: string }) {
  return (
    <button aria-label={name} className={clsx("flex h-[22px] items-center justify-center border-r border-[#555]", text ? "w-16" : "w-[22px]", on ? "bg-[linear-gradient(#e8f6fa,#8cc9dc)]" : "bg-[linear-gradient(#c9c9c9,#8f8f8f)]")}>
      <Icon name={name} />
      {text && (
        <>
          <span className="text-[12px] text-black">{text}</span>
          <svg viewBox="0 0 7 4" className="ml-[2px] h-1 w-[7px]"><path d="M0 0h7L3.500 4z" /></svg>
        </>
      )}
    </button>
  );
}

function StatusBar() {
  return (
    <footer className="mx-[3px] flex h-[25px] shrink-0 items-start border-t border-black bg-[linear-gradient(#9a9a9a,#6e6e6e)] font-['Liberation_Sans',sans-serif] text-black">
      <span className="w-[195px] shrink-0 whitespace-nowrap pl-[11px] text-[11px] leading-[23px]">138353.4298, -514931.9597, 0.0000</span>
      {modes.map(([n, on]) => <StatusButton key={n} name={n} on={on} />)}
      <div className="flex-1" />
      <button className="h-[22px] w-[55px] border-x border-[#555] bg-[linear-gradient(#c9c9c9,#8f8f8f)] text-[12px]">МОДЕЛЬ</button>
      <StatusButton name="Лист" />
      <StatusButton name="Быстрый просмотр" />
      <div className="w-[11px]" />
      {["Панорамирование", "Зумирование", "Штурвал", "Аниматор"].map((n) => <StatusButton key={n} name={n} />)}
      <div className="w-[11px]" />
      <StatusButton name="Аннотации" text="1:250" />
      <StatusButton name="Видимость аннотаций" />
      <StatusButton name="Автоаннотации" />
      <div className="w-[6px]" />
      <StatusButton name="Настройка" />
      <StatusButton name="Блокировка" />
      <div className="w-1" />
      <button aria-label="Доверенные" className="flex h-[22px] w-7 items-center justify-center bg-[#676d73]"><Icon name="Доверенные" /></button>
      <button aria-label="Меню строки состояния" className="flex h-[22px] w-[15px] items-center justify-center border-r border-[#555] bg-[linear-gradient(#c9c9c9,#8f8f8f)]"><svg viewBox="0 0 5 3" className="w-[5px] h-[3px]"><path d="M0 0h5L2.500 3z" /></svg></button>
      <StatusButton name="Очистить экран" />
      <svg viewBox="0 0 16 16" className="size-4 self-end" fill="#ddd"><path d="M11 4h2v2h-2zM7 8h2v2H7zM11 8h2v2h-2zM3 12h2v2H3zM7 12h2v2H7zM11 12h2v2h-2z" /></svg>
    </footer>
  );
}

const tasks = [
  { title: "Шайсултанова", icon: <><path d="M1 4h6l1 2h8v9H1z" fill="#f4cf5a" stroke="#b58a1c" /><path d="M2 8h13v6H2z" fill="#fdeea0" /></> },
  { title: "методичка ОПСК б...", icon: <><path d="M4 1h11v14H4z" fill="#fff" stroke="#6a8cc0" /><path d="M6 13h8M11 4h3M11 7h3M11 10h3" stroke="#7aa0dc" /><rect x="0" y="3" width="10" height="9" fill="#2a5db0" /><text x="5" y="11" textAnchor="middle" fontSize="9" fontWeight="700" fill="#fff">W</text></> },
  { title: "Безымянный111 - P...", icon: <><path d="M4 7h8l-1 8H5z" fill="#cfd6dc" stroke="#667" /><path d="M5 11L3 1" stroke="#d03a2a" strokeWidth="2" /><path d="M8 11V1" stroke="#e8b52a" strokeWidth="2" /><path d="M10 11l3-10" stroke="#3c9a48" strokeWidth="2" /></> },
  { title: "AutoCAD 2009 - УЧ...", icon: <><path d="M1.500 4.500h13v10h-13z" fill="#e8eef6" stroke="#6f86a8" /><path d="M5 1l3-1 6 11-4-1-6 3-3 0z" fill="#cf1f26" /></>, active: true },
];

function Taskbar() {
  return (
    <div className="flex h-[29px] shrink-0 items-center border-t-2 border-[#fbfaf5] bg-[#ece9d8] text-[12px] text-black">
      <button className={clsx("flex h-[23px] w-[55px] shrink-0 items-center gap-[2px] pl-1 font-bold", bevel)}>
        <svg viewBox="0 0 16 16" className="size-[15px]">
          <path d="M2 2c2-1 4-1 5 0L6 7C5 6 3 6 1 7z" fill="#e2532a" /><path d="M8 2c2 1 4 1 6 0l-1 5c-2 1-4 1-6 0z" fill="#6cb33f" />
          <path d="M1 8c2-1 4-1 5 0l-1 5c-1-1-3-1-5 0z" fill="#3b7ad9" /><path d="M7 8c2 1 4 1 6 0l-1 5c-2 1-4 1-6 0z" fill="#f5c62c" />
        </svg>
        Пуск
      </button>
      <div className="ml-1 flex flex-1 gap-[3px]">
        {tasks.map((t) => (
          <button key={t.title} className={clsx("flex h-[24px] w-[160px] items-center gap-1 whitespace-nowrap pl-1", t.active ? "border border-t-[#716f64] border-l-[#716f64] border-b-white border-r-white bg-[#f6f5ef] font-bold" : bevel)}>
            <svg viewBox="0 0 16 16" className="size-4 shrink-0" fill="none">{t.icon}</svg>
            {t.title}
          </button>
        ))}
      </div>
      <span className="mr-[2px] bg-[#316ac5] px-px text-[11px] leading-4 text-white">RL</span>
      <div className="flex h-6 items-center gap-1 border border-t-[#aca899] border-l-[#aca899] border-b-white border-r-white pl-1 pr-[10px]">
        <button aria-label="Показать скрытые значки" className="text-[13px] font-bold leading-none">«</button>
        <svg viewBox="0 0 16 16" className="size-4"><path d="M1 1h4v5l5-5h5L7 8l2 2v5H5l-1-6v6H1z" fill="#e01b22" /><path d="M8 9l6 5M14 9v5H9" stroke="#111" strokeWidth="1.500" fill="none" /></svg>
        <svg viewBox="0 0 16 16" className="size-4" stroke="#555"><path d="M5.500 1.500h9v7h-9z" fill="#2a49b8" /><path d="M1.500 5.500h9v7h-9z" fill="#3b62da" /><path d="M3 14.500h7" strokeWidth="2" stroke="#888" /></svg>
        <span className="bg-[linear-gradient(#d8202c_5px,#1b1f8a_5px)] bg-clip-text text-[17px] font-bold leading-none text-transparent">ti</span>
        <time className="ml-2">12:54</time>
      </div>
    </div>
  );
}

export default function App() {
  return (
    <div className="flex h-screen flex-col overflow-hidden bg-[linear-gradient(#dde3ee,#7f9fd6_160px,#a9bfe6_50%,#7f9fd6)] font-['DejaVu_Sans_Condensed','Noto_Sans',sans-serif]">
      <div className="mx-[3px] mt-[3px] flex min-h-0 flex-1 flex-col overflow-hidden rounded-t-[5px] border-x border-b-2 border-[#3c3c3c] bg-[#686868]">
        <Header />
        <Toolbars />
        <main className="flex min-h-0 flex-1 items-start pl-[2px] pr-[5px] pt-[2px]">
          <Column items={dimTools} />
          <div className="ml-1 mt-px"><Column items={drawTools} /></div>
          <div className="ml-[6px] flex h-full min-w-0 flex-1 flex-col border border-[#d8d5c4] bg-[#fffdf2]">
            <div className="flex min-h-0 flex-1">
              <Drawing />
              <div className="flex w-[18px] shrink-0 flex-col items-center bg-[#f5f3ea]">
                <ScrollButton dir="up" />
                <div className="flex-1" />
                <Thumb />
                <ScrollButton dir="down" />
              </div>
            </div>
            <LayoutTabs />
          </div>
          <div className="ml-[6px]">
            <Column items={modifyTools} />
            <Column items={orderTools} />
          </div>
        </main>
        <CommandLine />
        <StatusBar />
      </div>
      <Taskbar />
    </div>
  );
}
